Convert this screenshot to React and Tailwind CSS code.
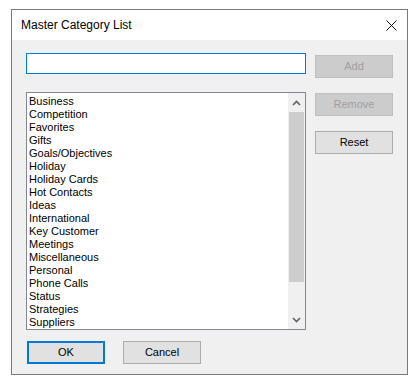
const categories = [
  'Business',
  'Competition',
  'Favorites',
  'Gifts',
  'Goals/Objectives',
  'Holiday',
  'Holiday Cards',
  'Hot Contacts',
  'Ideas',
  'International',
  'Key Customer',
  'Meetings',
  'Miscellaneous',
  'Personal',
  'Phone Calls',
  'Status',
  'Strategies',
  'Suppliers',
];

function Chevron({ up }) {
  return (
    <svg width="9" height="6" viewBox="0 0 9 6" className="block">
      <path
        d={up ? 'M1 5 L4.5 1.5 L8 5' : 'M1 1 L4.5 4.5 L8 1'}
        fill="none"
        stroke="#606060"
        strokeWidth="1.6"
      />
    </svg>
  );
}

function WinButton({ children, disabled, primary, className = '' }) {
  const look = disabled
    ? 'bg-[#cccccc] border border-[#bfbfbf] text-[#a0a0a0]'
    : primary
      ? 'bg-[#e1e1e1] border-2 border-[#0078d7] text-black'
      : 'bg-[#e1e1e1] border border-[#adadad] text-black';
  return (
    <div className={`w-[78px] h-[23px] flex items-center justify-center text-[11px] ${look} ${className}`}>
      {children}
    </div>
  );
}

export default function App() {
  return (
    <div
      className="w-[414px] h-[384px] bg-white pt-[9px] pl-[11px]"
      style={{ fontFamily: '"Liberation Sans", Arial, sans-serif' }}
    >
      <div className="w-[397px] h-[366px] border border-[#7a7a7a] flex flex-col">
        <div className="h-[30px] bg-white flex items-center justify-between pl-[9px] pr-[10px]">
          <span className="text-[12px] text-black">Master Category List</span>
          <svg width="11" height="11" viewBox="0 0 11 11">
            <path d="M0.5 0.5 L10.5 10.5 M10.5 0.5 L0.5 10.5" stroke="#111" strokeWidth="1" />
          </svg>
        </div>
        <div className="flex-1 bg-[#f0f0f0] pl-[14px] pt-[13px]">
          <div className="flex">
            <div className="w-[280px] flex flex-col">
              <div className="h-[21px] bg-white border border-[#0078d7]" />
              <div className="mt-[18px] h-[238px] bg-white border border-[#828790] flex">
                <div className="flex-1 pt-[2px] pl-[2px] overflow-hidden">
                  {categories.map((c) => (
                    <div key={c} className="h-[13px] leading-[13px] text-[11px] text-black whitespace-nowrap">
                      {c}
                    </div>
                  ))}
                </div>
                <div className="w-[17px] bg-[#f0f0f0] flex flex-col">
                  <div className="h-[19px] flex items-center justify-center">
                    <Chevron up />
                  </div>
                  <div className="mx-[1px] h-[170px] bg-[#cdcdcd]" />
                  <div className="flex-1 flex items-end justify-center pb-[6px]">
                    <Chevron />
                  </div>
                </div>
              </div>
            </div>
            <div className="ml-[9px] pt-[2px] flex flex-col">
              <WinButton disabled>Add</WinButton>
              <WinButton disabled className="mt-[15px]">Remove</WinButton>
              <WinButton className="mt-[15px] h-[22px]">Reset</WinButton>
            </div>
          </div>
          <div className="flex mt-[11px] ml-[1px] gap-[18px]">
            <WinButton primary>OK</WinButton>
            <WinButton>Cancel</WinButton>
          </div>
        </div>
      </div>
    </div>
  );
}
